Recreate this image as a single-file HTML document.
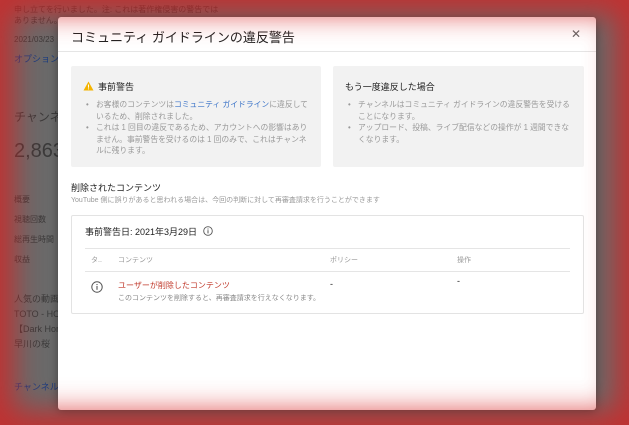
<!DOCTYPE html>
<html><head><meta charset="utf-8"><style>
*{margin:0;padding:0;box-sizing:border-box}
body{width:629px;height:425px;overflow:hidden;position:relative;background:#6a6a6a;font-family:"Liberation Sans","Noto Sans CJK JP",sans-serif;}
.bg{position:absolute;font-size:8px;color:#3a3a3a}
.vig{position:absolute;inset:0;box-shadow:inset 0 0 28px 14px rgba(215,35,35,.8);pointer-events:none;z-index:5}
.dlg{position:absolute;left:58px;top:17px;width:538px;height:393px;background:#fff;border-radius:3px;box-shadow:0 2px 10px rgba(0,0,0,.4);z-index:2}
.hd{height:35px;border-bottom:1px solid #e5e5e5;position:relative}
.hd h1{position:absolute;left:13px;top:10px;font-size:13px;font-weight:normal;color:#222}
.x{position:absolute;right:15px;top:10px;font-size:12px;color:#666}
.box{position:absolute;top:49px;height:101px;background:#f2f2f2;border-radius:2px;padding:15px 12px;font-size:7.8px;color:#999;line-height:11.5px}
.box h3{font-size:9px;font-weight:normal;color:#222;margin-bottom:6px;height:12px;line-height:12px}
.box ul{list-style:none}
.box li{position:relative;padding-left:13px;}
.box li:before{content:"•";position:absolute;left:3px}
a{color:#3c74c8;text-decoration:none}
.s{position:absolute;left:13px;font-size:9px;color:#222}
.card{position:absolute;left:13px;top:198px;width:513px;height:99px;border:1px solid #e3e3e3;border-radius:2px}
.t{position:absolute;font-size:7px;color:#999}
</style></head><body>
<div class="bg" style="left:14px;top:4px">申し立てを行いました。注: これは著作権侵害の警告では<br>ありません。<br><br>2021/03/23</div>
<div class="bg" style="left:14px;top:52px;color:#1a3d80;font-size:9px">オプション</div>
<div class="bg" style="left:14px;top:108px;font-size:12px">チャンネル</div>
<div class="bg" style="left:14px;top:140px;font-size:20px">2,863</div>
<div class="bg" style="left:14px;top:190px;line-height:20px">概要<br>視聴回数<br>総再生時間<br>収益</div>
<div class="bg" style="left:14px;top:292px;font-size:9px;line-height:15px">人気の動画<br>TOTO - HOLD<br>【Dark Horse<br>早川の桜</div>
<div class="bg" style="left:14px;top:380px;color:#1a3d80;font-size:9px">チャンネル</div>
<div class="dlg">
<div class="hd"><h1>コミュニティ ガイドラインの違反警告</h1><span class="x">✕</span></div>
<div class="box" style="left:13px;width:250px">
<h3><svg width="11" height="10" viewBox="0 0 11 10" style="vertical-align:-1px;margin-right:4px"><path d="M5.5 0.5L10.5 9.5H0.5Z" fill="#f4b400"/><rect x="5" y="3.5" width="1" height="3.2" fill="#fff"/><rect x="5" y="7.4" width="1" height="1" fill="#fff"/></svg>事前警告</h3>
<ul><li>お客様のコンテンツは<a>コミュニティ ガイドライン</a>に違反しているため、削除されました。</li><li>これは 1 回目の違反であるため、アカウントへの影響はありません。事前警告を受けるのは 1 回のみで、これはチャンネルに残ります。</li></ul></div>
<div class="box" style="left:275px;width:251px">
<h3>もう一度違反した場合</h3>
<ul><li>チャンネルはコミュニティ ガイドラインの違反警告を受けることになります。</li><li>アップロード、投稿、ライブ配信などの操作が 1 週間できなくなります。</li></ul></div>
<div class="s" style="top:164px">削除されたコンテンツ</div>
<div class="s" style="top:178px;font-size:7px;color:#999">YouTube 側に誤りがあると思われる場合は、今回の判断に対して再審査請求を行うことができます</div>
<div class="card">
<div style="position:absolute;left:13px;top:9px;font-size:9px;color:#222">事前警告日: 2021年3月29日 <svg width="10" height="10" viewBox="0 0 10 10" style="vertical-align:-1px;margin-left:3px"><circle cx="5" cy="5" r="4.3" fill="none" stroke="#555" stroke-width=".9"/><rect x="4.5" y="4.2" width="1" height="3.2" fill="#555"/><rect x="4.5" y="2.5" width="1" height="1" fill="#555"/></svg></div>
<div style="position:absolute;left:13px;right:13px;top:32px;border-top:1px solid #e5e5e5"></div>
<div class="t" style="left:19px;top:39px">タ..</div>
<div class="t" style="left:46px;top:39px">コンテンツ</div>
<div class="t" style="left:258px;top:39px">ポリシー</div>
<div class="t" style="left:385px;top:39px">操作</div>
<div style="position:absolute;left:13px;right:13px;top:55px;border-top:1px solid #e5e5e5"></div>
<svg width="12" height="12" viewBox="0 0 12 12" style="position:absolute;left:19px;top:65px"><circle cx="6" cy="6" r="5.2" fill="none" stroke="#555" stroke-width="1"/><rect x="5.45" y="5" width="1.1" height="3.8" fill="#555"/><rect x="5.45" y="3" width="1.1" height="1.1" fill="#555"/></svg>
<div style="position:absolute;left:46px;top:64px;font-size:8px;color:#c0392b">ユーザーが削除したコンテンツ</div>
<div class="t" style="left:46px;top:77px;color:#888">このコンテンツを削除すると、再審査請求を行えなくなります。</div>
<div style="position:absolute;left:258px;top:63px;font-size:9px;color:#222">-</div>
<div style="position:absolute;left:385px;top:60px;font-size:9px;color:#222">-</div>
</div>
</div>
<div class="vig"></div>
</body></html>
